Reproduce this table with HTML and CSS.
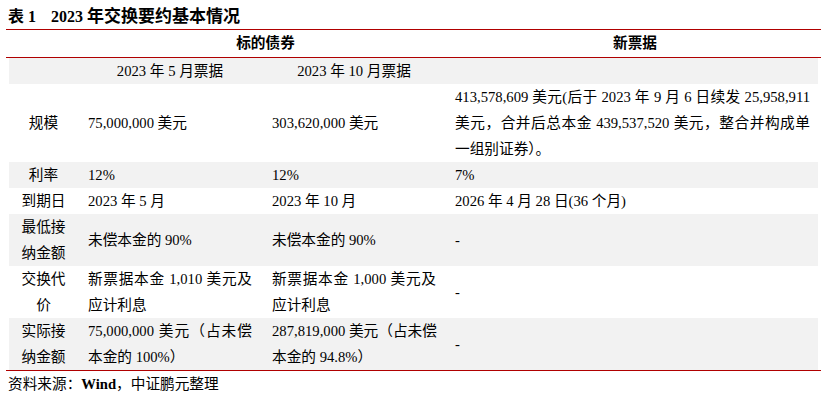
FILE: index.html
```html
<!DOCTYPE html>
<html lang="zh-CN">
<head>
<meta charset="utf-8">
<title>2023年交换要约基本情况</title>
<link rel="stylesheet" href="styles.css">
</head>
<body>
<div class="page">
  <div class="title"><span class="tno">表 1</span>2023 <span class="tc">年交换要约基本情况</span></div>
  <div class="tbl">
    <table class="head">
      <colgroup><col class="h1"><col class="h2"><col class="h3"><col class="h4"></colgroup>
      <tr><th></th><th colspan="2">标的债券</th><th>新票据</th></tr>
    </table>
    <table class="body">
      <colgroup><col class="c1"><col class="c2"><col class="c3"><col class="c4"></colgroup>
      <tr class="grey sub"><td class="lab"></td><td>2023 年 5 月票据</td><td>2023 年 10 月票据</td><td></td></tr>
      <tr><td class="lab">规模</td><td>75,000,000 美元</td><td>303,620,000 美元</td>
        <td><span class="jl">413,578,609 美元(后于 2023 年 9 月 6 日续发 25,958,911</span><span class="jl">美元，合并后总本金 439,537,520 美元，整合并构成单</span><span class="ln">一组别证券）。</span></td></tr>
      <tr class="grey"><td class="lab">利率</td><td>12%</td><td>12%</td><td>7%</td></tr>
      <tr><td class="lab">到期日</td><td>2023 年 5 月</td><td>2023 年 10 月</td><td>2026 年 4 月 28 日(36 个月)</td></tr>
      <tr class="grey"><td class="lab">最低接<br>纳金额</td><td>未偿本金的 90%</td><td>未偿本金的 90%</td><td>-</td></tr>
      <tr><td class="lab">交换代<br>价</td><td><span class="jl">新票据本金 1,010 美元及</span><span class="ln">应计利息</span></td><td><span class="jl">新票据本金 1,000 美元及</span><span class="ln">应计利息</span></td><td>-</td></tr>
      <tr class="grey"><td class="lab">实际接<br>纳金额</td><td><span class="jl">75,000,000 美元（占未偿</span><span class="ln">本金的 100%）</span></td><td><span class="ln">287,819,000 美元（占未偿</span><span class="ln">本金的 94.8%）</span></td><td>-</td></tr>
    </table>
  </div>
  <div class="src">资料来源：<span class="w">Wind</span>，中证鹏元整理</div>
</div>
</body>
</html>
```

FILE: styles.css
```css
html, body {
  margin: 0;
  padding: 0;
  background: #ffffff;
}

body {
  font-family: "Liberation Serif", "Noto Sans CJK SC", serif;
  color: #000000;
}

.page {
  width: 826px;
  padding-left: 6px;
  box-sizing: border-box;
}

.title {
  margin-top: 7px;
  margin-bottom: 2px;
  padding-left: 2px;
  height: 20px;
  line-height: 20px;
  font-size: 16px;
  font-weight: bold;
  white-space: nowrap;
}

.title .tno {
  margin-right: 15px;
}

.title .tc {
  font-size: 17px;
}

.tbl {
  width: 815px;
  border-top: 1px solid #b00000;
  border-bottom: 1px solid #b00000;
}

table {
  border-collapse: collapse;
  border-spacing: 0;
  table-layout: fixed;
}

.head {
  width: 815px;
  border-bottom: 1px solid #b00000;
}

.head th {
  height: 27px;
  line-height: 27px;
  padding: 0;
  font-size: 14.67px;
  font-weight: bold;
  text-align: center;
}

col.h1 { width: 76px; }
col.h2 { width: 184px; }
col.h3 { width: 183px; }
col.h4 { width: 372px; }

.body {
  width: 809px;
  margin: 0 3px;
}

col.c1 { width: 73px; }
col.c2 { width: 184px; }
col.c3 { width: 183px; }
col.c4 { width: 369px; }

.body td {
  padding: 0 14px 0 6px;
  height: 26px;
  line-height: 26px;
  font-size: 14.67px;
  vertical-align: middle;
  text-align: left;
}

.body td:nth-child(3) {
  padding-right: 13px;
}

.body td:nth-child(4) {
  padding-right: 8px;
}

.body td.lab {
  padding: 0 4px 0 0;
  text-align: center;
}

.body tr.sub td {
  text-align: center;
}

.grey td {
  background: #f2f2f2;
}

.jl {
  display: block;
  text-align: justify;
  text-align-last: justify;
}

.ln {
  display: block;
  white-space: nowrap;
}

.src {
  height: 26px;
  line-height: 26px;
  padding-left: 2px;
  font-size: 14.67px;
  white-space: nowrap;
}

.src .w {
  font-weight: bold;
}
```
